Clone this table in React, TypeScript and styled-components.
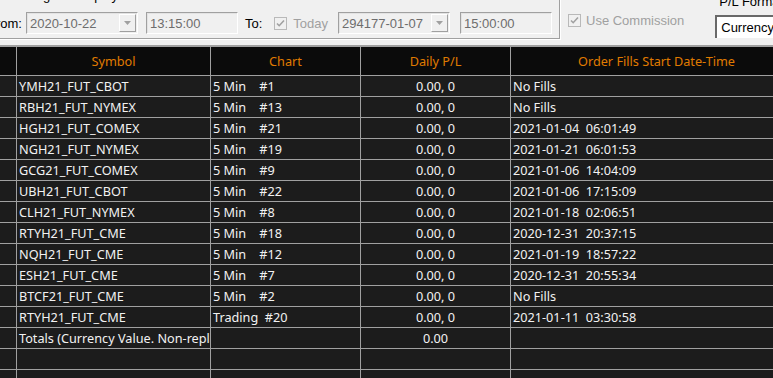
import React from 'react'
import styled, { createGlobalStyle } from 'styled-components'

const GlobalStyle = createGlobalStyle`
  html, body {
    margin: 0;
    padding: 0;
    background: #1c1c1c;
  }
  body {
    width: 773px;
    height: 378px;
    overflow: hidden;
  }
`

const Screen = styled.div`
  width: 773px;
  height: 378px;
  overflow: hidden;
  display: flex;
  flex-direction: column;
  background: #1c1c1c;
`

const TopPanel = styled.div`
  height: 45px;
  flex: none;
  display: flex;
  align-items: flex-start;
  background: #f0f0f0;
  border-bottom: 2px solid #a0a0a0;
  overflow: hidden;
  font-family: 'Liberation Sans', Arial, sans-serif;
  font-size: 13px;
  color: #000;
`

const GroupBox = styled.div`
  margin-left: -20px;
  margin-top: -9px;
  padding: 0 7px 4px 8px;
  border-right: 1px solid #a0a0a0;
  border-bottom: 1px solid #a0a0a0;
  box-shadow: 1px 1px 0 #ffffff;
  display: flex;
  flex-direction: column;
`

const GroupTitle = styled.div`
  line-height: 15px;
  height: 15px;
  margin-top: -3px;
  white-space: nowrap;
`

const ControlRow = styled.div`
  display: flex;
  align-items: center;
  margin-top: 9px;
  height: 22px;
`

const Label = styled.span<{ $ml?: number; $mr?: number; $muted?: boolean }>`
  margin-left: ${(p) => p.$ml ?? 0}px;
  margin-right: ${(p) => p.$mr ?? 0}px;
  color: ${(p) => (p.$muted ? '#a0a0a0' : '#000')};
  white-space: nowrap;
  line-height: 15px;
`

const Field = styled.div<{ $w: number; $ml?: number; $white?: boolean }>`
  box-sizing: border-box;
  width: ${(p) => p.$w}px;
  height: 22px;
  margin-left: ${(p) => p.$ml ?? 0}px;
  display: flex;
  align-items: center;
  padding: 0 1px 0 3px;
  background: ${(p) => (p.$white ? '#ffffff' : '#f0f0f0')};
  border-top: 1px solid #a0a0a0;
  border-left: 1px solid #a0a0a0;
  border-right: 1px solid #ffffff;
  border-bottom: 1px solid #ffffff;
  box-shadow: inset 1px 1px 0 #e3e3e3;
  color: ${(p) => (p.$white ? '#000' : '#6d6d6d')};
  white-space: nowrap;
`

const FieldText = styled.span`
  flex: 1;
  overflow: hidden;
`

const DropButton = styled.div`
  width: 17px;
  height: 18px;
  box-sizing: border-box;
  background: #f0f0f0;
  border-top: 1px solid #ffffff;
  border-left: 1px solid #ffffff;
  border-right: 1px solid #a0a0a0;
  border-bottom: 1px solid #a0a0a0;
  display: flex;
  align-items: center;
  justify-content: center;
`

const CheckBox = styled.div<{ $ml?: number }>`
  box-sizing: border-box;
  width: 13px;
  height: 13px;
  margin-left: ${(p) => p.$ml ?? 0}px;
  border: 1px solid #b9b9b9;
  background: #f0f0f0;
  display: flex;
  align-items: center;
  justify-content: center;
  flex: none;
`

const CommissionRow = styled.div`
  display: flex;
  align-items: center;
  margin-left: 8px;
  margin-top: 13px;
  height: 15px;
`

const FormatColumn = styled.div`
  display: flex;
  flex-direction: column;
  margin-left: 31px;
  margin-top: -6px;
`

const FormatLabel = styled.div`
  line-height: 15px;
  height: 15px;
  padding-left: 4px;
  white-space: nowrap;
`

const CurrencyBox = styled.div`
  box-sizing: border-box;
  margin-top: 6px;
  width: 90px;
  height: 23px;
  display: flex;
  align-items: center;
  padding-left: 4px;
  background: #ffffff;
  border-top: 2px solid #696969;
  border-left: 2px solid #696969;
  color: #000;
`

const Table = styled.div`
  flex: 1;
  background: #1c1c1c;
  font-family: 'Noto Sans', 'Segoe UI', sans-serif;
  font-size: 12.7px;
  color: #f2f2f2;
`

const Row = styled.div<{ $h: number }>`
  display: grid;
  grid-template-columns: 17px 194px 150px 150px 292px;
  height: ${(p) => p.$h}px;
`

const Cell = styled.div<{ $align?: 'left' | 'center'; $head?: boolean }>`
  box-sizing: border-box;
  border-right: 1px solid #a0a0a0;
  border-bottom: 1px solid #a0a0a0;
  background: ${(p) => (p.$head ? '#0b0b0b' : '#1c1c1c')};
  color: ${(p) => (p.$head ? '#e07b00' : '#f2f2f2')};
  text-align: ${(p) => p.$align ?? 'left'};
  padding: 0 2px;
  display: flex;
  align-items: center;
  justify-content: ${(p) => (p.$align === 'center' ? 'center' : 'flex-start')};
  white-space: pre;
  overflow: hidden;
`

const Arrow = () => (
  <svg width="7" height="4" viewBox="0 0 7 4">
    <path d="M0 0h7L3.5 4z" fill="#a0a0a0" />
  </svg>
)

const Tick = () => (
  <svg width="9" height="9" viewBox="0 0 9 9">
    <path d="M1 4.5l2.2 2.2L8 1.5" stroke="#a0a0a0" strokeWidth="1.6" fill="none" />
  </svg>
)

const rows: [string, string, string, string][] = [
  ['YMH21_FUT_CBOT', '5 Min    #1', '0.00, 0', 'No Fills'],
  ['RBH21_FUT_NYMEX', '5 Min    #13', '0.00, 0', 'No Fills'],
  ['HGH21_FUT_COMEX', '5 Min    #21', '0.00, 0', '2021-01-04  06:01:49'],
  ['NGH21_FUT_NYMEX', '5 Min    #19', '0.00, 0', '2021-01-21  06:01:53'],
  ['GCG21_FUT_COMEX', '5 Min    #9', '0.00, 0', '2021-01-06  14:04:09'],
  ['UBH21_FUT_CBOT', '5 Min    #22', '0.00, 0', '2021-01-06  17:15:09'],
  ['CLH21_FUT_NYMEX', '5 Min    #8', '0.00, 0', '2021-01-18  02:06:51'],
  ['RTYH21_FUT_CME', '5 Min    #18', '0.00, 0', '2020-12-31  20:37:15'],
  ['NQH21_FUT_CME', '5 Min    #12', '0.00, 0', '2021-01-19  18:57:22'],
  ['ESH21_FUT_CME', '5 Min    #7', '0.00, 0', '2020-12-31  20:55:34'],
  ['BTCF21_FUT_CME', '5 Min    #2', '0.00, 0', 'No Fills'],
  ['RTYH21_FUT_CME', 'Trading  #20', '0.00, 0', '2021-01-11  03:30:58'],
  ['Totals (Currency Value. Non-replayed)', '', '0.00', ''],
  ['', '', '', ''],
  ['', '', '', ''],
]

export default function App() {
  return (
    <>
      <GlobalStyle />
      <Screen>
        <TopPanel>
          <GroupBox>
            <GroupTitle>Date Range to Display</GroupTitle>
            <ControlRow>
              <Label $mr={4}>From:</Label>
              <Field $w={112}>
                <FieldText>2020-10-22</FieldText>
                <DropButton>
                  <Arrow />
                </DropButton>
              </Field>
              <Field $w={92} $ml={8}>
                <FieldText>13:15:00</FieldText>
              </Field>
              <Label $ml={7}>To:</Label>
              <CheckBox $ml={12}>
                <Tick />
              </CheckBox>
              <Label $ml={6} $muted>
                Today
              </Label>
              <Field $w={112} $ml={10}>
                <FieldText>294177-01-07</FieldText>
                <DropButton>
                  <Arrow />
                </DropButton>
              </Field>
              <Field $w={92} $ml={10}>
                <FieldText>15:00:00</FieldText>
              </Field>
            </ControlRow>
          </GroupBox>
          <CommissionRow>
            <CheckBox>
              <Tick />
            </CheckBox>
            <Label $ml={5} $muted>
              Use Commission
            </Label>
          </CommissionRow>
          <FormatColumn>
            <FormatLabel>P/L Format</FormatLabel>
            <CurrencyBox>Currency</CurrencyBox>
          </FormatColumn>
        </TopPanel>
        <Table>
          <Row $h={29}>
            <Cell $head />
            <Cell $head $align="center">Symbol</Cell>
            <Cell $head $align="center">Chart</Cell>
            <Cell $head $align="center">Daily P/L</Cell>
            <Cell $head $align="center">Order Fills Start Date-Time</Cell>
          </Row>
          {rows.map((r, i) => (
            <Row $h={21} key={i}>
              <Cell />
              <Cell>{r[0]}</Cell>
              <Cell>{r[1]}</Cell>
              <Cell $align="center">{r[2]}</Cell>
              <Cell>{r[3]}</Cell>
            </Row>
          ))}
        </Table>
      </Screen>
    </>
  )
}
